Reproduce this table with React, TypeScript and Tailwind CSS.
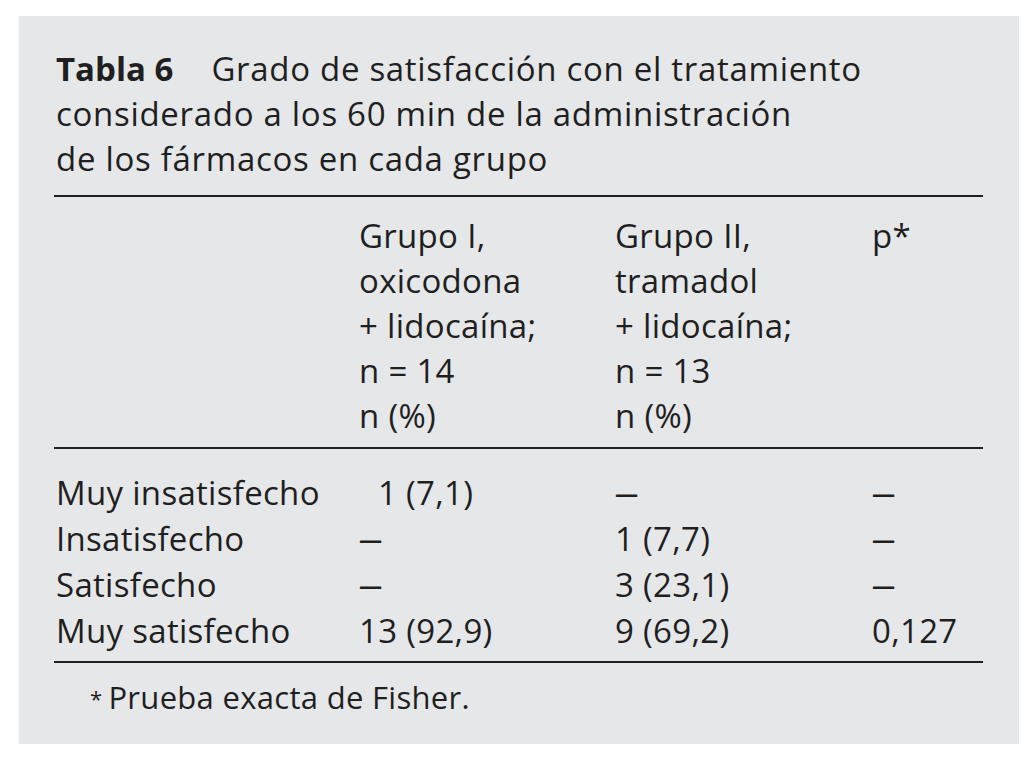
const rows = [
  { label: "Muy insatisfecho", g1: "1 (7,1)", g1Pad: true, g2: "—", p: "—" },
  { label: "Insatisfecho", g1: "—", g1Pad: false, g2: "1 (7,7)", p: "—" },
  { label: "Satisfecho", g1: "—", g1Pad: false, g2: "3 (23,1)", p: "—" },
  { label: "Muy satisfecho", g1: "13 (92,9)", g1Pad: false, g2: "9 (69,2)", p: "0,127" },
];

const Cell = ({ value, pad }: { value: string; pad?: boolean }) =>
  value === "—" ? (
    <div>
      <span className="inline-block origin-left scale-x-[0.7]">—</span>
    </div>
  ) : (
    <div className={pad ? "pl-[19px]" : ""}>{value}</div>
  );

const App = () => {
  return (
    <div className="h-[758px] w-[1025px] bg-white pl-[19px] pt-[16px] font-['Open_Sans',sans-serif] text-[#1f1f1f]">
      <div className="h-[728px] w-[1000px] bg-[#e6e7e9] pl-[35px] pr-[36px] pt-[30px]">
        <h1 className="pl-[2px] text-[33px] leading-[45px] tracking-[0.7px]">
          <span className="font-bold tracking-[0px]">Tabla 6</span>
          <span className="inline-block w-[38px]" />
          Grado de satisfacción con el tratamiento
          <br />
          considerado a los 60 min de la administración
          <br />
          de los fármacos en cada grupo
        </h1>

        <div className="mt-[14px] h-[2px] bg-[#1f1f1f]" />

        <div className="grid grid-cols-[305px_256px_257px_1fr] pt-[16px] pb-[9px] text-[33px] leading-[45px] tracking-[0.3px]">
          <div />
          <div>
            Grupo I,
            <br />
            oxicodona
            <br />+ lidocaína;
            <br />n = 14
            <br />n (%)
          </div>
          <div>
            Grupo II,
            <br />
            tramadol
            <br />+ lidocaína;
            <br />n = 13
            <br />n (%)
          </div>
          <div>p*</div>
        </div>

        <div className="h-[2px] bg-[#1f1f1f]" />

        <div className="grid grid-cols-[305px_256px_257px_1fr] pt-[21px] pb-[7px] text-[33px] leading-[46px] tracking-[0.3px]">
          {rows.map((r) => (
            <div key={r.label} className="contents">
              <div className="pl-[2px]">{r.label}</div>
              <Cell value={r.g1} pad={r.g1Pad} />
              <Cell value={r.g2} />
              <Cell value={r.p} />
            </div>
          ))}
        </div>

        <div className="h-[2px] bg-[#1f1f1f]" />

        <p className="pl-[36px] pt-[12px] text-[31px] leading-[45px] tracking-[0.3px]">
          <sup className="relative top-[-2px] mr-[6px] text-[22px]">*</sup>Prueba exacta de Fisher.
        </p>
      </div>
    </div>
  );
};

export default App;
